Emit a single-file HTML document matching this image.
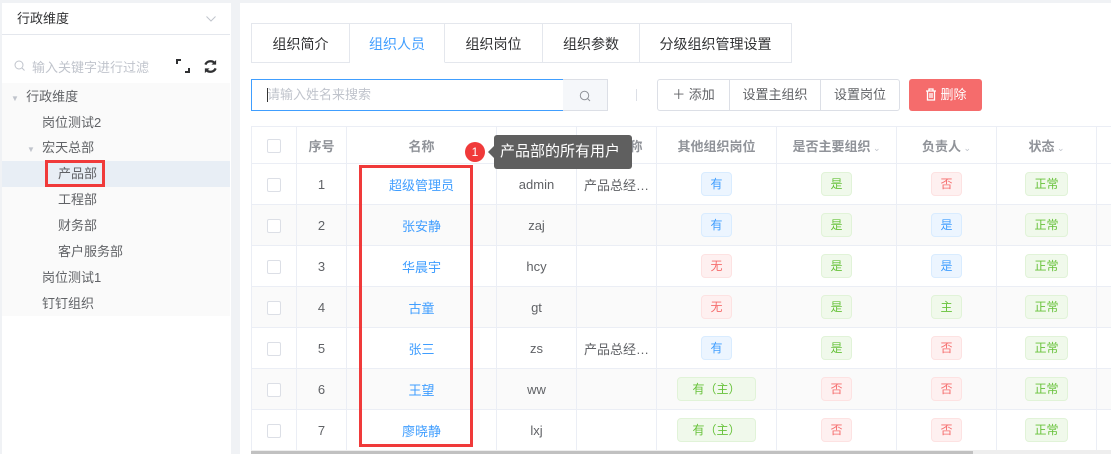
<!DOCTYPE html><html><head><meta charset="utf-8"><style>
*{box-sizing:border-box;margin:0;padding:0}
body{width:1111px;height:454px;overflow:hidden;background:#fff;font-family:"Liberation Sans","Noto Sans CJK SC",sans-serif;font-size:13px;color:#606266;position:relative}
.a{position:absolute}
.tree div{position:absolute;height:26px;line-height:26px;font-size:13px;color:#606266}
.tab{position:absolute;top:23px;height:40px;line-height:40px;text-align:center;border:1px solid #e4e7ed;border-left:none;background:#fff;font-size:14px;color:#303133}
table{position:absolute;left:251px;top:126px;width:875px;border-collapse:collapse;table-layout:fixed}
td,th{border:1px solid #ebeef5;text-align:center;font-size:13px;padding:0;white-space:nowrap;overflow:hidden}
th{height:37px;color:#909399;font-weight:bold}
td{height:41px;color:#606266}
tr.e td{background:#fafafa}
.cb{display:inline-block;width:14px;height:14px;border:1px solid #dcdfe6;border-radius:2px;background:#fff;vertical-align:middle}
.n{color:#409eff}
.t{display:inline-block;height:24px;line-height:22px;padding:0 8px;border:1px solid;border-radius:4px;font-size:12px}
.b{background:#ecf5ff;border-color:#d9ecff;color:#409eff}
.g{background:#f0f9eb;border-color:#e1f3d8;color:#67c23a}
.r{background:#fef0f0;border-color:#fde2e2;color:#f56c6c}
.ar{font-size:9px;color:#c0c4cc;font-weight:normal}
</style></head><body>
<div class="a" style="left:0;top:0;width:1111px;height:3px;background:#f0f2f5"></div>
<div class="a" style="left:231px;top:0;width:9px;height:454px;background:#f0f2f5"></div>
<div class="a" style="left:0;top:0;width:2px;height:454px;background:#f0f2f5"></div>
<div class="a" style="left:2px;top:3px;width:228px;height:32px;border-bottom:1px solid #e4e7ed;line-height:32px;padding-left:15px;color:#303133">行政维度</div>
<svg class="a" style="left:206px;top:16px" width="10" height="6" viewBox="0 0 10 6"><path d="M0.5 0.5L5 5 9.5 0.5" fill="none" stroke="#c0c4cc"/></svg>
<div class="a" style="left:2px;top:83px;width:228px;height:233px;background:#fafafa"></div>
<div class="a" style="left:2px;top:161px;width:228px;height:26px;background:#e8eef5"></div>
<svg class="a" style="left:14px;top:60px" width="11" height="11" viewBox="0 0 11 11"><circle cx="5" cy="5" r="4" fill="none" stroke="#c0c4cc"/><path d="M8 8l2.5 2.5" stroke="#c0c4cc"/></svg>
<div class="a" style="left:32px;top:57px;color:#c0c4cc;font-size:13px">输入关键字进行过滤</div>
<svg class="a" style="left:176px;top:59px" width="14" height="14" viewBox="0 0 14 14"><path d="M1 5V1h4M13 9v4H9" fill="none" stroke="#303133" stroke-width="2"/></svg>
<svg class="a" style="left:203px;top:59px" width="15" height="15" viewBox="0 0 16 16"><path d="M13 5A6 6 0 0 0 2.5 6M3 11a6 6 0 0 0 10.5-1" fill="none" stroke="#303133" stroke-width="2.4"/><path d="M14 1v5h-5z M2 15v-5h5z" fill="#303133"/></svg>
<div class="tree">
<div style="left:11px;top:84px"><span style="font-size:8px;color:#c0c4cc">▼</span>&nbsp; 行政维度</div>
<div style="left:42px;top:110px">岗位测试2</div>
<div style="left:27px;top:135px"><span style="font-size:8px;color:#c0c4cc">▼</span>&nbsp; 宏天总部</div>
<div style="left:58px;top:161px">产品部</div>
<div style="left:58px;top:187px">工程部</div>
<div style="left:58px;top:213px">财务部</div>
<div style="left:58px;top:239px">客户服务部</div>
<div style="left:42px;top:265px">岗位测试1</div>
<div style="left:42px;top:291px">钉钉组织</div>
</div>
<div class="a" style="left:45px;top:160px;width:60px;height:27px;border:3px solid #f03a3a"></div>
<div class="tab" style="left:251px;width:99px;border-left:1px solid #e4e7ed">组织简介</div>
<div class="tab" style="left:350px;width:95px;color:#409eff;border-bottom-color:#fff">组织人员</div>
<div class="tab" style="left:445px;width:98px">组织岗位</div>
<div class="tab" style="left:543px;width:97px">组织参数</div>
<div class="tab" style="left:640px;width:152px">分级组织管理设置</div>
<div class="a" style="left:251px;top:79px;width:313px;height:32px;border:1px solid #409eff;line-height:30px;padding-left:15px;color:#c0c4cc"><span style="position:absolute;left:15px;top:8px;width:1px;height:14px;background:#333"></span>请输入姓名来搜索</div>
<div class="a" style="left:563px;top:79px;width:45px;height:32px;background:#f5f7fa;border:1px solid #dcdfe6;border-left:none"></div>
<svg class="a" style="left:579px;top:90px" width="12" height="12" viewBox="0 0 12 12"><circle cx="5.5" cy="5.5" r="4.2" fill="none" stroke="#909399"/><path d="M8.5 8.5l2.5 2.5" stroke="#909399"/></svg>
<div class="a" style="left:636px;top:89px;width:1px;height:12px;background:#dcdfe6"></div>
<div class="a" style="left:657px;top:79px;width:243px;height:32px;border:1px solid #dcdfe6;border-radius:3px;color:#606266;line-height:30px">
<span class="a" style="left:0;width:72px;text-align:center;border-right:1px solid #dcdfe6">＋ 添加</span>
<span class="a" style="left:72px;width:91px;text-align:center;border-right:1px solid #dcdfe6">设置主组织</span>
<span class="a" style="left:163px;width:78px;text-align:center">设置岗位</span></div>
<div class="a" style="left:909px;top:79px;width:73px;height:32px;background:#f56c6c;border-radius:3px;color:#fff;line-height:32px;text-align:center;padding-left:16px">删除</div>
<svg class="a" style="left:925px;top:88px" width="12" height="13" viewBox="0 0 12 13"><path d="M1 3h10M4 3V1h4v2M2.5 3v9h7V3M5 5v5M7 5v5" fill="none" stroke="#fff" stroke-width="1.3"/></svg>
<table>
<colgroup><col style="width:45px"><col style="width:50px"><col style="width:150px"><col style="width:80px"><col style="width:80px"><col style="width:120px"><col style="width:120px"><col style="width:100px"><col style="width:100px"><col style="width:30px"></colgroup>
<tr><th><span class="cb"></span></th><th>序号</th><th>名称</th><th>账号</th><th>岗位名称</th><th>其他组织岗位</th><th>是否主要组织<span class="ar"> &#8964;</span></th><th>负责人<span class="ar"> &#8964;</span></th><th>状态<span class="ar"> &#8964;</span></th><th></th></tr>
<tr><td><span class="cb"></span></td><td>1</td><td class="n">超级管理员</td><td>admin</td><td>产品总经…</td><td><span class="t b">有</span></td><td><span class="t g">是</span></td><td><span class="t r">否</span></td><td><span class="t g">正常</span></td><td></td></tr>
<tr class="e"><td><span class="cb"></span></td><td>2</td><td class="n">张安静</td><td>zaj</td><td></td><td><span class="t b">有</span></td><td><span class="t g">是</span></td><td><span class="t b">是</span></td><td><span class="t g">正常</span></td><td></td></tr>
<tr><td><span class="cb"></span></td><td>3</td><td class="n">华晨宇</td><td>hcy</td><td></td><td><span class="t r">无</span></td><td><span class="t g">是</span></td><td><span class="t b">是</span></td><td><span class="t g">正常</span></td><td></td></tr>
<tr class="e"><td><span class="cb"></span></td><td>4</td><td class="n">古童</td><td>gt</td><td></td><td><span class="t r">无</span></td><td><span class="t g">是</span></td><td><span class="t g">主</span></td><td><span class="t g">正常</span></td><td></td></tr>
<tr><td><span class="cb"></span></td><td>5</td><td class="n">张三</td><td>zs</td><td>产品总经…</td><td><span class="t b">有</span></td><td><span class="t g">是</span></td><td><span class="t r">否</span></td><td><span class="t g">正常</span></td><td></td></tr>
<tr class="e"><td><span class="cb"></span></td><td>6</td><td class="n">王望</td><td>ww</td><td></td><td><span class="t g" style="padding:0 14px">有（主）</span></td><td><span class="t r">否</span></td><td><span class="t r">否</span></td><td><span class="t g">正常</span></td><td></td></tr>
<tr><td><span class="cb"></span></td><td>7</td><td class="n">廖晓静</td><td>lxj</td><td></td><td><span class="t g" style="padding:0 14px">有（主）</span></td><td><span class="t r">否</span></td><td><span class="t r">否</span></td><td><span class="t g">正常</span></td><td></td></tr>
</table>
<div class="a" style="left:251px;top:450px;width:860px;height:4px;background:#eee"></div>
<div class="a" style="left:251px;top:451px;width:722px;height:3px;background:#c1c1c1"></div>
<div class="a" style="left:359px;top:165px;width:114px;height:282px;border:3px solid #f03a3a"></div>
<div class="a" style="left:465px;top:142px;width:20px;height:20px;border-radius:50%;background:#f03a3a;color:#fff;text-align:center;line-height:20px;font-size:12px">1</div>
<div class="a" style="left:494px;top:135px;width:138px;height:34px;background:#5f5f5f;border-radius:3px;color:#fff;font-size:15px;line-height:34px;padding-left:6px">产品部的所有用户</div>
<div class="a" style="left:488px;top:146px;width:0;height:0;border:6px solid transparent;border-right-color:#5f5f5f;border-left:none"></div>
</body></html>
